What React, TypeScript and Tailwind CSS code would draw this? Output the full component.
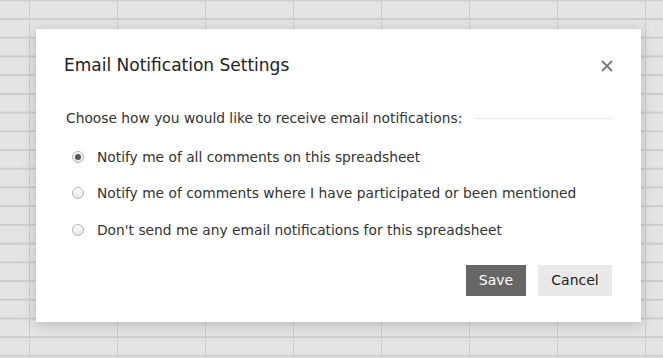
const options = [
  'Notify me of all comments on this spreadsheet',
  'Notify me of comments where I have participated or been mentioned',
  "Don't send me any email notifications for this spreadsheet",
]

function Radio({ checked }: { checked: boolean }) {
  return (
    <span className="flex h-[12px] w-[12px] items-center justify-center rounded-full border border-[#b5b5b5] bg-gradient-to-b from-[#fdfdfd] to-[#e6e6e6]">
      {checked && <span className="h-[6px] w-[6px] rounded-full bg-[#555]" />}
    </span>
  )
}

export default function App() {
  return (
    <div
      className="h-[358px] w-[663px] overflow-hidden bg-[#e4e4e4] pl-[36px] pt-[29px] text-[#333]"
      style={{
        backgroundImage:
          'linear-gradient(to right, #cdcdcd 1.5px, transparent 1.5px), linear-gradient(to bottom, #cdcdcd 1.5px, transparent 1.5px)',
        backgroundSize: '88px 18.72px',
        backgroundPosition: '29px 18px',
        fontFamily: '"DejaVu Sans", sans-serif',
      }}
    >
      <div className="flex h-[293px] w-[605px] flex-col bg-white pl-[28px] pr-[29px] pt-[25px] shadow-[0_2px_12px_rgba(0,0,0,0.2)]">
        <div className="flex h-[24px] items-center justify-between">
          <h2 className="text-[17px] text-[#222]">Email Notification Settings</h2>
          <svg width="12" height="12" viewBox="0 0 12 12" className="mr-[-1px]">
            <path d="M1 1L11 11M11 1L1 11" stroke="#777" strokeWidth="1.8" />
          </svg>
        </div>
        <div className="mt-[30px] flex items-center pl-[2px]">
          <p className="text-[13.8px] whitespace-nowrap">Choose how you would like to receive email notifications:</p>
          <div className="ml-[15px] flex-1 border-t border-dotted border-[#d4d4d4]" />
        </div>
        <div className="mt-[10px] flex flex-col">
          {options.map((o, i) => (
            <label key={o} className="flex h-[36.5px] items-center pl-[8px]">
              <Radio checked={i === 0} />
              <span className="ml-[13px] text-[13.8px] whitespace-nowrap">{o}</span>
            </label>
          ))}
        </div>
        <div className="mt-[17px] flex justify-end gap-[12px]">
          <button className="h-[31px] w-[60px] bg-[#666] text-[14px] text-white">Save</button>
          <button className="h-[31px] w-[74px] bg-[#e9e9e9] text-[14px] text-[#222]">Cancel</button>
        </div>
      </div>
    </div>
  )
}
